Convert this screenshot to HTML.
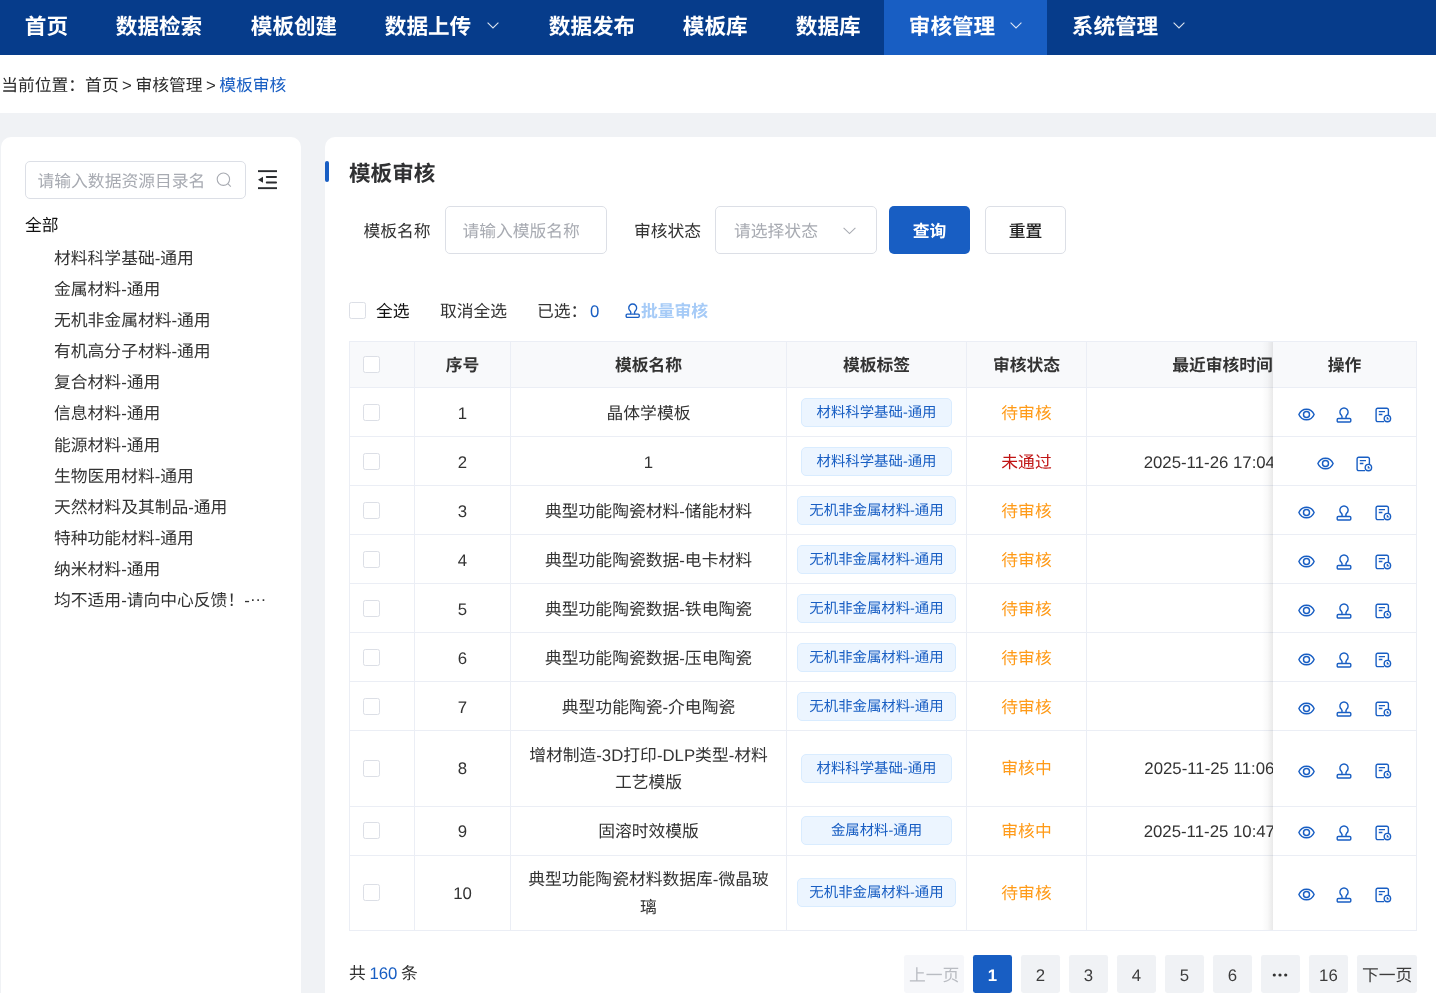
<!DOCTYPE html>
<html lang="zh-CN">
<head>
<meta charset="utf-8">
<title>模板审核</title>
<style>
*{box-sizing:border-box;margin:0;padding:0}
html,body{width:1436px;height:993px;overflow:hidden}
body{background:#f0f2f5;font-family:"Liberation Sans","Noto Sans CJK SC",sans-serif;font-size:16.8px;color:#333;position:relative;text-rendering:geometricPrecision}
.page{position:absolute;left:0;top:0;width:1436px;height:993px;overflow:hidden;will-change:transform}
.ic{position:absolute;display:block;overflow:visible}
/* NAV */
.nav{position:absolute;left:0;top:0;width:1436px;height:55px;background:#063c8b;color:#fff;font-weight:700;font-size:21.6px;white-space:nowrap}
.nav .it{position:absolute;top:0;height:55px;line-height:54.4px;padding-left:24.8px}
.nav .it.on{background:#185ec3}
/* CRUMB */
.crumb{position:absolute;left:0;top:55px;width:1436px;height:58px;background:#fff;line-height:62px;padding-left:1.2px;color:#2b2b2b;white-space:nowrap;word-spacing:-1.2px}
.crumb b{font-weight:400;color:#185ec3}
/* LEFT */
.left{position:absolute;left:1px;top:137px;width:300px;height:900px;background:#fff;border-radius:10px}
.sinput{position:absolute;left:24px;top:24px;width:221px;height:38px;border:1px solid #dcdfe6;border-radius:5px;line-height:39px;padding-left:11.5px;color:#a8abb2;white-space:nowrap;overflow:hidden}
.tree{position:absolute;left:0;top:71.6px;width:300px}
.tree div{height:31.2px;line-height:34.2px;white-space:nowrap}
.tree .root{padding-left:24px;color:#111;margin-bottom:1.6px}
.tree .leaf{padding-left:53px;color:#333}
/* MAIN */
.main{position:absolute;left:325px;top:137px;width:1130px;height:900px;background:#fff;border-radius:10px}
.bar{position:absolute;left:0;top:24px;width:4px;height:21px;background:#185ec3;border-radius:2px}
.title{position:absolute;left:24px;top:18px;font-size:21.6px;font-weight:700;color:#303133;line-height:38.4px;white-space:nowrap}
.lbl{position:absolute;top:69px;height:48px;line-height:52px;color:#333;white-space:nowrap}
.inp{position:absolute;top:69px;height:48px;border:1px solid #dcdfe6;border-radius:5px;line-height:49px;color:#a8abb2;white-space:nowrap}
.btn{position:absolute;top:69px;height:48px;width:81px;border-radius:5px;line-height:51px;text-align:center;white-space:nowrap}
.btn.pri{background:#185ec3;color:#fff;font-weight:700}
.btn.def{background:#fff;border:1px solid #dcdfe6;color:#222;font-weight:500;line-height:49px}
.tb{position:absolute;top:160px;height:28px;line-height:30px;white-space:nowrap}
.cb{position:absolute;width:17px;height:17px;border:1px solid #dcdfe6;border-radius:2.4px;background:#fff}
/* TABLE */
.tbl{position:absolute;left:24px;top:204px;width:1068px;height:590px;border:1px solid #ebeef5;border-right:none;overflow:hidden}
.row{position:absolute;left:0;width:1200px;border-bottom:1px solid #ebeef5;background:#fff}
.row.hd{background:#f8f9fb;font-weight:700;color:#333}
.row.up .c{padding-top:1.2px}
.row.up .c1,.row.up .c4{padding-top:0}
.row.up .cb{top:-0.1px}
.row.hd .c{padding-top:2.2px}
.row.hd .c1{padding-top:0}
.row.hd .cb{top:-0.2px}
.c{position:absolute;top:0;bottom:0;border-right:1px solid #ebeef5;display:flex;align-items:center;justify-content:center;text-align:center;line-height:27.6px;padding-top:3.2px}
.c1{left:0;width:65px;justify-content:flex-start;padding:0 0 0 13px}.c2{left:65px;width:96px}.c3{left:161px;width:276px;padding-left:14px;padding-right:14px}.c4{left:437px;width:180px;padding-top:0}.c5{left:617px;width:120px}.c6{left:737px;width:272px}
.row:not(.hd) .c6{padding-right:3px}
.c .cb{position:relative;top:0.9px;display:block}
.tag{display:inline-block;min-width:150.4px;text-align:center;height:29px;line-height:28.4px;padding:0 11px;font-size:14.4px;color:#185ec3;background:#ecf5ff;border:1px solid #d9ecff;border-radius:5px;white-space:nowrap}
.wait{color:#ff9a17}.fail{color:#c01414}
.fix{position:absolute;left:948px;top:204px;width:144px;height:590px;border-top:1px solid #ebeef5;border-right:1px solid #ebeef5;border-bottom:1px solid #ebeef5;background:#fff;overflow:hidden}
.shd{position:absolute;left:937px;top:205px;width:11px;height:588px;background:linear-gradient(to right,rgba(0,0,0,0) 0%,rgba(0,0,0,.022) 50%,rgba(0,0,0,.085) 100%)}
.fix .row{width:143px}
.fix .c{left:0;width:143px;border-right:none}
.pg{position:absolute;top:818px;height:38.4px;line-height:41.4px;background:#f0f2f5;border-radius:2.4px;text-align:center;color:#3c3c3c;white-space:nowrap}
.pg.on{background:#185ec3;color:#fff;font-weight:700}
.pg.dis{color:#b9bcc2;background:#f6f7fa}
</style>
</head>
<body>
<div class="page">
<div class="nav">
<div class="it" style="left:0px;width:91px">首页</div>
<div class="it" style="left:91px;width:135px">数据检索</div>
<div class="it" style="left:226px;width:134px">模板创建</div>
<div class="it" style="left:360px;width:164px">数据上传</div>
<div class="it" style="left:524px;width:134px">数据发布</div>
<div class="it" style="left:658px;width:113px">模板库</div>
<div class="it" style="left:771px;width:113px">数据库</div>
<div class="it on" style="left:884px;width:163px">审核管理</div>
<div class="it" style="left:1047px;width:164px">系统管理</div>
<svg class="ic" style="left:487.2px;top:21.5px" width="12" height="7" viewBox="0 0 12 7" fill="none" stroke="#fff" stroke-opacity=".85" stroke-width="1.1"><path d="M0.6 0.6L6 6L11.4 0.6"/></svg><svg class="ic" style="left:1010.2px;top:21.5px" width="12" height="7" viewBox="0 0 12 7" fill="none" stroke="#fff" stroke-opacity=".85" stroke-width="1.1"><path d="M0.6 0.6L6 6L11.4 0.6"/></svg><svg class="ic" style="left:1173.2px;top:21.5px" width="12" height="7" viewBox="0 0 12 7" fill="none" stroke="#fff" stroke-opacity=".85" stroke-width="1.1"><path d="M0.6 0.6L6 6L11.4 0.6"/></svg>
</div>
<div class="crumb">当前位置：首页 &gt; 审核管理 &gt; <b>模板审核</b></div>
<div class="left"><svg class="ic" style="left:215.4px;top:34.6px" width="16" height="16" viewBox="0 0 16 16" fill="none" stroke="#a8abb2" stroke-width="1.1"><circle cx="7.4" cy="7.2" r="6.2"/><path d="M11.8 11.6L14.8 14.6"/></svg><svg class="ic" style="left:257px;top:32.8px" width="19" height="20" viewBox="0 0 19 20" fill="#2b2d30"><rect x="0" y="0.2" width="19" height="1.9"/><rect x="7.8" y="6" width="11.2" height="1.9" rx=".9"/><rect x="7.8" y="11.6" width="11.2" height="1.9" rx=".9"/><rect x="0" y="17.2" width="19" height="1.9"/><path d="M0 9.7L5 6.7V12.7Z"/></svg><div class="sinput">请输入数据资源目录名</div><div class="tree"><div class="root">全部</div>
<div class="leaf" style="position:relative;top:1px">材料科学基础-通用</div>
<div class="leaf">金属材料-通用</div>
<div class="leaf">无机非金属材料-通用</div>
<div class="leaf">有机高分子材料-通用</div>
<div class="leaf">复合材料-通用</div>
<div class="leaf">信息材料-通用</div>
<div class="leaf">能源材料-通用</div>
<div class="leaf">生物医用材料-通用</div>
<div class="leaf">天然材料及其制品-通用</div>
<div class="leaf">特种功能材料-通用</div>
<div class="leaf">纳米材料-通用</div>
<div class="leaf">均不适用-请向中心反馈！-<span style="position:relative;top:-5.4px">…</span></div>
</div></div>
<div class="main">
<div class="bar"></div><div class="title">模板审核</div>
<div class="lbl" style="left:38.4px">模板名称</div>
<div class="inp" style="left:120px;width:162px;padding-left:16.4px">请输入模版名称</div>
<div class="lbl" style="left:309px">审核状态</div>
<div class="inp" style="left:390px;width:162px;padding-left:18px">请选择状态</div>
<svg class="ic" style="left:518.4px;top:90px" width="13" height="8" viewBox="0 0 13 8" fill="none" stroke="#a8abb2" stroke-width="1.1"><path d="M0.6 0.8L6.5 6.6L12.4 0.8"/></svg>
<div class="btn pri" style="left:564px">查询</div>
<div class="btn def" style="left:660px">重置</div>
<div class="cb" style="left:24px;top:165px"></div>
<div class="tb" style="left:51px;color:#111">全选</div>
<div class="tb" style="left:115px">取消全选</div>
<div class="tb" style="left:212px">已选：</div>
<div class="tb" style="left:265px;color:#185ec3">0</div>
<svg class="ic" style="left:299.6px;top:165.7px" width="15.4" height="15.4" viewBox="0 0 16 16" fill="none" stroke="#185ec3" stroke-width="1.4" stroke-linejoin="round"><path d="M5.7 11.5C6.4 10.3 6.3 9.3 5.4 8.3A4.1 4.1 0 1 1 10.6 8.3C9.7 9.3 9.6 10.3 10.3 11.5"/><rect x="1.2" y="11.5" width="13.6" height="3.5" rx="1.1"/></svg>
<div class="tb" style="left:316px;color:#a6cbf7;font-weight:700">批量审核</div>
<div class="tbl"><div class="row hd" style="top:0;height:46px"><div class="c c1"><span class="cb"></span></div><div class="c c2">序号</div><div class="c c3">模板名称</div><div class="c c4" style="padding-top:2.2px">模板标签</div><div class="c c5">审核状态</div><div class="c c6">最近审核时间</div></div>
<div class="row" style="top:46px;height:49px"><div class="c c1"><span class="cb"></span></div><div class="c c2">1</div><div class="c c3">晶体学模板</div><div class="c c4"><span class="tag">材料科学基础-通用</span></div><div class="c c5 wait">待审核</div><div class="c c6"></div></div>
<div class="row" style="top:95px;height:49px"><div class="c c1"><span class="cb"></span></div><div class="c c2">2</div><div class="c c3">1</div><div class="c c4"><span class="tag">材料科学基础-通用</span></div><div class="c c5 fail">未通过</div><div class="c c6">2025-11-26 17:04:10</div></div>
<div class="row" style="top:144px;height:49px"><div class="c c1"><span class="cb"></span></div><div class="c c2">3</div><div class="c c3">典型功能陶瓷材料-储能材料</div><div class="c c4"><span class="tag">无机非金属材料-通用</span></div><div class="c c5 wait">待审核</div><div class="c c6"></div></div>
<div class="row" style="top:193px;height:49px"><div class="c c1"><span class="cb"></span></div><div class="c c2">4</div><div class="c c3">典型功能陶瓷数据-电卡材料</div><div class="c c4"><span class="tag">无机非金属材料-通用</span></div><div class="c c5 wait">待审核</div><div class="c c6"></div></div>
<div class="row" style="top:242px;height:49px"><div class="c c1"><span class="cb"></span></div><div class="c c2">5</div><div class="c c3">典型功能陶瓷数据-铁电陶瓷</div><div class="c c4"><span class="tag">无机非金属材料-通用</span></div><div class="c c5 wait">待审核</div><div class="c c6"></div></div>
<div class="row" style="top:291px;height:49px"><div class="c c1"><span class="cb"></span></div><div class="c c2">6</div><div class="c c3">典型功能陶瓷数据-压电陶瓷</div><div class="c c4"><span class="tag">无机非金属材料-通用</span></div><div class="c c5 wait">待审核</div><div class="c c6"></div></div>
<div class="row" style="top:340px;height:49px"><div class="c c1"><span class="cb"></span></div><div class="c c2">7</div><div class="c c3">典型功能陶瓷-介电陶瓷</div><div class="c c4"><span class="tag">无机非金属材料-通用</span></div><div class="c c5 wait">待审核</div><div class="c c6"></div></div>
<div class="row up" style="top:389px;height:76px"><div class="c c1"><span class="cb"></span></div><div class="c c2">8</div><div class="c c3">增材制造-3D打印-DLP类型-材料<br>工艺模版</div><div class="c c4"><span class="tag">材料科学基础-通用</span></div><div class="c c5 wait">审核中</div><div class="c c6">2025-11-25 11:06:32</div></div>
<div class="row up" style="top:465px;height:49px"><div class="c c1"><span class="cb"></span></div><div class="c c2">9</div><div class="c c3">固溶时效模版</div><div class="c c4"><span class="tag" style="position:relative;top:-1px">金属材料-通用</span></div><div class="c c5 wait">审核中</div><div class="c c6">2025-11-25 10:47:18</div></div>
<div class="row up" style="top:514px;height:74px;border-bottom:none"><div class="c c1"><span class="cb"></span></div><div class="c c2">10</div><div class="c c3">典型功能陶瓷材料数据库-微晶玻<br>璃</div><div class="c c4"><span class="tag" style="position:relative;top:-1px">无机非金属材料-通用</span></div><div class="c c5 wait">待审核</div><div class="c c6"></div></div></div>
<div class="shd"></div>
<div class="fix"><div class="row hd" style="top:0;height:46px"><div class="c">操作</div></div>
<div class="row" style="top:46px;height:49px"></div>
<div class="row" style="top:95px;height:49px"></div>
<div class="row" style="top:144px;height:49px"></div>
<div class="row" style="top:193px;height:49px"></div>
<div class="row" style="top:242px;height:49px"></div>
<div class="row" style="top:291px;height:49px"></div>
<div class="row" style="top:340px;height:49px"></div>
<div class="row" style="top:389px;height:76px"></div>
<div class="row" style="top:465px;height:49px"></div>
<div class="row" style="top:514px;height:74px;border-bottom:none"></div>
<svg class="ic" style="left:25.0px;top:66.2px" width="17" height="13" viewBox="0 0 17 13" fill="none" stroke="#185ec3" stroke-width="1.45"><path d="M0.9 6.5C2.3 3.2 5.2 1.2 8.5 1.2S14.7 3.2 16.1 6.5C14.7 9.8 11.8 11.8 8.5 11.8S2.3 9.8 0.9 6.5Z" stroke-linejoin="round"/><circle cx="8.5" cy="6.5" r="3"/></svg>
<svg class="ic" style="left:63.4px;top:64.7px" width="16" height="16" viewBox="0 0 16 16" fill="none" stroke="#185ec3" stroke-width="1.4" stroke-linejoin="round"><path d="M5.7 11.5C6.4 10.3 6.3 9.3 5.4 8.3A4.1 4.1 0 1 1 10.6 8.3C9.7 9.3 9.6 10.3 10.3 11.5"/><rect x="1.2" y="11.5" width="13.6" height="3.5" rx="1.1"/></svg>
<svg class="ic" style="left:101.7px;top:64.7px" width="17" height="16" viewBox="0 0 17 16" fill="none" stroke="#185ec3" stroke-width="1.4"><path d="M9 14.6H2.7A1.6 1.6 0 0 1 1.1 13V2.9A1.6 1.6 0 0 1 2.7 1.3H11.8A1.6 1.6 0 0 1 13.4 2.9V8"/><path d="M3.8 4.7H10M3.8 7.5H7.4" stroke-width="1.3"/><circle cx="12.4" cy="11.6" r="3.2" fill="#fff"/><path d="M12.3 9.9V11.9H13.8" stroke-width="1.1"/></svg>
<svg class="ic" style="left:43.9px;top:115.2px" width="17" height="13" viewBox="0 0 17 13" fill="none" stroke="#185ec3" stroke-width="1.45"><path d="M0.9 6.5C2.3 3.2 5.2 1.2 8.5 1.2S14.7 3.2 16.1 6.5C14.7 9.8 11.8 11.8 8.5 11.8S2.3 9.8 0.9 6.5Z" stroke-linejoin="round"/><circle cx="8.5" cy="6.5" r="3"/></svg>
<svg class="ic" style="left:82.8px;top:113.7px" width="17" height="16" viewBox="0 0 17 16" fill="none" stroke="#185ec3" stroke-width="1.4"><path d="M9 14.6H2.7A1.6 1.6 0 0 1 1.1 13V2.9A1.6 1.6 0 0 1 2.7 1.3H11.8A1.6 1.6 0 0 1 13.4 2.9V8"/><path d="M3.8 4.7H10M3.8 7.5H7.4" stroke-width="1.3"/><circle cx="12.4" cy="11.6" r="3.2" fill="#fff"/><path d="M12.3 9.9V11.9H13.8" stroke-width="1.1"/></svg>
<svg class="ic" style="left:25.0px;top:164.2px" width="17" height="13" viewBox="0 0 17 13" fill="none" stroke="#185ec3" stroke-width="1.45"><path d="M0.9 6.5C2.3 3.2 5.2 1.2 8.5 1.2S14.7 3.2 16.1 6.5C14.7 9.8 11.8 11.8 8.5 11.8S2.3 9.8 0.9 6.5Z" stroke-linejoin="round"/><circle cx="8.5" cy="6.5" r="3"/></svg>
<svg class="ic" style="left:63.4px;top:162.7px" width="16" height="16" viewBox="0 0 16 16" fill="none" stroke="#185ec3" stroke-width="1.4" stroke-linejoin="round"><path d="M5.7 11.5C6.4 10.3 6.3 9.3 5.4 8.3A4.1 4.1 0 1 1 10.6 8.3C9.7 9.3 9.6 10.3 10.3 11.5"/><rect x="1.2" y="11.5" width="13.6" height="3.5" rx="1.1"/></svg>
<svg class="ic" style="left:101.7px;top:162.7px" width="17" height="16" viewBox="0 0 17 16" fill="none" stroke="#185ec3" stroke-width="1.4"><path d="M9 14.6H2.7A1.6 1.6 0 0 1 1.1 13V2.9A1.6 1.6 0 0 1 2.7 1.3H11.8A1.6 1.6 0 0 1 13.4 2.9V8"/><path d="M3.8 4.7H10M3.8 7.5H7.4" stroke-width="1.3"/><circle cx="12.4" cy="11.6" r="3.2" fill="#fff"/><path d="M12.3 9.9V11.9H13.8" stroke-width="1.1"/></svg>
<svg class="ic" style="left:25.0px;top:213.2px" width="17" height="13" viewBox="0 0 17 13" fill="none" stroke="#185ec3" stroke-width="1.45"><path d="M0.9 6.5C2.3 3.2 5.2 1.2 8.5 1.2S14.7 3.2 16.1 6.5C14.7 9.8 11.8 11.8 8.5 11.8S2.3 9.8 0.9 6.5Z" stroke-linejoin="round"/><circle cx="8.5" cy="6.5" r="3"/></svg>
<svg class="ic" style="left:63.4px;top:211.7px" width="16" height="16" viewBox="0 0 16 16" fill="none" stroke="#185ec3" stroke-width="1.4" stroke-linejoin="round"><path d="M5.7 11.5C6.4 10.3 6.3 9.3 5.4 8.3A4.1 4.1 0 1 1 10.6 8.3C9.7 9.3 9.6 10.3 10.3 11.5"/><rect x="1.2" y="11.5" width="13.6" height="3.5" rx="1.1"/></svg>
<svg class="ic" style="left:101.7px;top:211.7px" width="17" height="16" viewBox="0 0 17 16" fill="none" stroke="#185ec3" stroke-width="1.4"><path d="M9 14.6H2.7A1.6 1.6 0 0 1 1.1 13V2.9A1.6 1.6 0 0 1 2.7 1.3H11.8A1.6 1.6 0 0 1 13.4 2.9V8"/><path d="M3.8 4.7H10M3.8 7.5H7.4" stroke-width="1.3"/><circle cx="12.4" cy="11.6" r="3.2" fill="#fff"/><path d="M12.3 9.9V11.9H13.8" stroke-width="1.1"/></svg>
<svg class="ic" style="left:25.0px;top:262.2px" width="17" height="13" viewBox="0 0 17 13" fill="none" stroke="#185ec3" stroke-width="1.45"><path d="M0.9 6.5C2.3 3.2 5.2 1.2 8.5 1.2S14.7 3.2 16.1 6.5C14.7 9.8 11.8 11.8 8.5 11.8S2.3 9.8 0.9 6.5Z" stroke-linejoin="round"/><circle cx="8.5" cy="6.5" r="3"/></svg>
<svg class="ic" style="left:63.4px;top:260.7px" width="16" height="16" viewBox="0 0 16 16" fill="none" stroke="#185ec3" stroke-width="1.4" stroke-linejoin="round"><path d="M5.7 11.5C6.4 10.3 6.3 9.3 5.4 8.3A4.1 4.1 0 1 1 10.6 8.3C9.7 9.3 9.6 10.3 10.3 11.5"/><rect x="1.2" y="11.5" width="13.6" height="3.5" rx="1.1"/></svg>
<svg class="ic" style="left:101.7px;top:260.7px" width="17" height="16" viewBox="0 0 17 16" fill="none" stroke="#185ec3" stroke-width="1.4"><path d="M9 14.6H2.7A1.6 1.6 0 0 1 1.1 13V2.9A1.6 1.6 0 0 1 2.7 1.3H11.8A1.6 1.6 0 0 1 13.4 2.9V8"/><path d="M3.8 4.7H10M3.8 7.5H7.4" stroke-width="1.3"/><circle cx="12.4" cy="11.6" r="3.2" fill="#fff"/><path d="M12.3 9.9V11.9H13.8" stroke-width="1.1"/></svg>
<svg class="ic" style="left:25.0px;top:311.2px" width="17" height="13" viewBox="0 0 17 13" fill="none" stroke="#185ec3" stroke-width="1.45"><path d="M0.9 6.5C2.3 3.2 5.2 1.2 8.5 1.2S14.7 3.2 16.1 6.5C14.7 9.8 11.8 11.8 8.5 11.8S2.3 9.8 0.9 6.5Z" stroke-linejoin="round"/><circle cx="8.5" cy="6.5" r="3"/></svg>
<svg class="ic" style="left:63.4px;top:309.7px" width="16" height="16" viewBox="0 0 16 16" fill="none" stroke="#185ec3" stroke-width="1.4" stroke-linejoin="round"><path d="M5.7 11.5C6.4 10.3 6.3 9.3 5.4 8.3A4.1 4.1 0 1 1 10.6 8.3C9.7 9.3 9.6 10.3 10.3 11.5"/><rect x="1.2" y="11.5" width="13.6" height="3.5" rx="1.1"/></svg>
<svg class="ic" style="left:101.7px;top:309.7px" width="17" height="16" viewBox="0 0 17 16" fill="none" stroke="#185ec3" stroke-width="1.4"><path d="M9 14.6H2.7A1.6 1.6 0 0 1 1.1 13V2.9A1.6 1.6 0 0 1 2.7 1.3H11.8A1.6 1.6 0 0 1 13.4 2.9V8"/><path d="M3.8 4.7H10M3.8 7.5H7.4" stroke-width="1.3"/><circle cx="12.4" cy="11.6" r="3.2" fill="#fff"/><path d="M12.3 9.9V11.9H13.8" stroke-width="1.1"/></svg>
<svg class="ic" style="left:25.0px;top:360.2px" width="17" height="13" viewBox="0 0 17 13" fill="none" stroke="#185ec3" stroke-width="1.45"><path d="M0.9 6.5C2.3 3.2 5.2 1.2 8.5 1.2S14.7 3.2 16.1 6.5C14.7 9.8 11.8 11.8 8.5 11.8S2.3 9.8 0.9 6.5Z" stroke-linejoin="round"/><circle cx="8.5" cy="6.5" r="3"/></svg>
<svg class="ic" style="left:63.4px;top:358.7px" width="16" height="16" viewBox="0 0 16 16" fill="none" stroke="#185ec3" stroke-width="1.4" stroke-linejoin="round"><path d="M5.7 11.5C6.4 10.3 6.3 9.3 5.4 8.3A4.1 4.1 0 1 1 10.6 8.3C9.7 9.3 9.6 10.3 10.3 11.5"/><rect x="1.2" y="11.5" width="13.6" height="3.5" rx="1.1"/></svg>
<svg class="ic" style="left:101.7px;top:358.7px" width="17" height="16" viewBox="0 0 17 16" fill="none" stroke="#185ec3" stroke-width="1.4"><path d="M9 14.6H2.7A1.6 1.6 0 0 1 1.1 13V2.9A1.6 1.6 0 0 1 2.7 1.3H11.8A1.6 1.6 0 0 1 13.4 2.9V8"/><path d="M3.8 4.7H10M3.8 7.5H7.4" stroke-width="1.3"/><circle cx="12.4" cy="11.6" r="3.2" fill="#fff"/><path d="M12.3 9.9V11.9H13.8" stroke-width="1.1"/></svg>
<svg class="ic" style="left:25.0px;top:422.7px" width="17" height="13" viewBox="0 0 17 13" fill="none" stroke="#185ec3" stroke-width="1.45"><path d="M0.9 6.5C2.3 3.2 5.2 1.2 8.5 1.2S14.7 3.2 16.1 6.5C14.7 9.8 11.8 11.8 8.5 11.8S2.3 9.8 0.9 6.5Z" stroke-linejoin="round"/><circle cx="8.5" cy="6.5" r="3"/></svg>
<svg class="ic" style="left:63.4px;top:421.2px" width="16" height="16" viewBox="0 0 16 16" fill="none" stroke="#185ec3" stroke-width="1.4" stroke-linejoin="round"><path d="M5.7 11.5C6.4 10.3 6.3 9.3 5.4 8.3A4.1 4.1 0 1 1 10.6 8.3C9.7 9.3 9.6 10.3 10.3 11.5"/><rect x="1.2" y="11.5" width="13.6" height="3.5" rx="1.1"/></svg>
<svg class="ic" style="left:101.7px;top:421.2px" width="17" height="16" viewBox="0 0 17 16" fill="none" stroke="#185ec3" stroke-width="1.4"><path d="M9 14.6H2.7A1.6 1.6 0 0 1 1.1 13V2.9A1.6 1.6 0 0 1 2.7 1.3H11.8A1.6 1.6 0 0 1 13.4 2.9V8"/><path d="M3.8 4.7H10M3.8 7.5H7.4" stroke-width="1.3"/><circle cx="12.4" cy="11.6" r="3.2" fill="#fff"/><path d="M12.3 9.9V11.9H13.8" stroke-width="1.1"/></svg>
<svg class="ic" style="left:25.0px;top:484.2px" width="17" height="13" viewBox="0 0 17 13" fill="none" stroke="#185ec3" stroke-width="1.45"><path d="M0.9 6.5C2.3 3.2 5.2 1.2 8.5 1.2S14.7 3.2 16.1 6.5C14.7 9.8 11.8 11.8 8.5 11.8S2.3 9.8 0.9 6.5Z" stroke-linejoin="round"/><circle cx="8.5" cy="6.5" r="3"/></svg>
<svg class="ic" style="left:63.4px;top:482.7px" width="16" height="16" viewBox="0 0 16 16" fill="none" stroke="#185ec3" stroke-width="1.4" stroke-linejoin="round"><path d="M5.7 11.5C6.4 10.3 6.3 9.3 5.4 8.3A4.1 4.1 0 1 1 10.6 8.3C9.7 9.3 9.6 10.3 10.3 11.5"/><rect x="1.2" y="11.5" width="13.6" height="3.5" rx="1.1"/></svg>
<svg class="ic" style="left:101.7px;top:482.7px" width="17" height="16" viewBox="0 0 17 16" fill="none" stroke="#185ec3" stroke-width="1.4"><path d="M9 14.6H2.7A1.6 1.6 0 0 1 1.1 13V2.9A1.6 1.6 0 0 1 2.7 1.3H11.8A1.6 1.6 0 0 1 13.4 2.9V8"/><path d="M3.8 4.7H10M3.8 7.5H7.4" stroke-width="1.3"/><circle cx="12.4" cy="11.6" r="3.2" fill="#fff"/><path d="M12.3 9.9V11.9H13.8" stroke-width="1.1"/></svg>
<svg class="ic" style="left:25.0px;top:546.2px" width="17" height="13" viewBox="0 0 17 13" fill="none" stroke="#185ec3" stroke-width="1.45"><path d="M0.9 6.5C2.3 3.2 5.2 1.2 8.5 1.2S14.7 3.2 16.1 6.5C14.7 9.8 11.8 11.8 8.5 11.8S2.3 9.8 0.9 6.5Z" stroke-linejoin="round"/><circle cx="8.5" cy="6.5" r="3"/></svg>
<svg class="ic" style="left:63.4px;top:544.7px" width="16" height="16" viewBox="0 0 16 16" fill="none" stroke="#185ec3" stroke-width="1.4" stroke-linejoin="round"><path d="M5.7 11.5C6.4 10.3 6.3 9.3 5.4 8.3A4.1 4.1 0 1 1 10.6 8.3C9.7 9.3 9.6 10.3 10.3 11.5"/><rect x="1.2" y="11.5" width="13.6" height="3.5" rx="1.1"/></svg>
<svg class="ic" style="left:101.7px;top:544.7px" width="17" height="16" viewBox="0 0 17 16" fill="none" stroke="#185ec3" stroke-width="1.4"><path d="M9 14.6H2.7A1.6 1.6 0 0 1 1.1 13V2.9A1.6 1.6 0 0 1 2.7 1.3H11.8A1.6 1.6 0 0 1 13.4 2.9V8"/><path d="M3.8 4.7H10M3.8 7.5H7.4" stroke-width="1.3"/><circle cx="12.4" cy="11.6" r="3.2" fill="#fff"/><path d="M12.3 9.9V11.9H13.8" stroke-width="1.1"/></svg></div>
<div class="tb" style="left:24px;top:822px;word-spacing:-1px">共 <span style="color:#185ec3">160</span> 条</div>
<div class="pg dis" style="left:579px;width:60.3px">上一页</div>
<div class="pg on" style="left:648px;width:38.9px">1</div>
<div class="pg " style="left:696px;width:38.9px">2</div>
<div class="pg " style="left:744px;width:38.9px">3</div>
<div class="pg " style="left:792px;width:38.9px">4</div>
<div class="pg " style="left:840px;width:38.9px">5</div>
<div class="pg " style="left:888px;width:38.9px">6</div>
<div class="pg " style="left:936px;width:38.9px"><svg width="16" height="4" viewBox="0 0 16 4" style="vertical-align:middle;position:relative;top:-1.5px"><circle cx="2.3" cy="2" r="1.6" fill="#333"/><circle cx="8" cy="2" r="1.6" fill="#333"/><circle cx="13.7" cy="2" r="1.6" fill="#333"/></svg></div>
<div class="pg " style="left:984px;width:38.9px">16</div>
<div class="pg " style="left:1032px;width:60.3px">下一页</div>
</div>
</div>
</body>
</html>
